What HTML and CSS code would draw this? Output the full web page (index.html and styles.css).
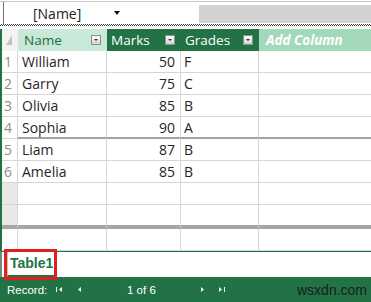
FILE: index.html
```html
<!DOCTYPE html>
<html lang="en">
<head>
  <meta charset="UTF-8">
  <title>Table1</title>
  <link rel="stylesheet" href="styles.css">
</head>
<body>
  <div class="window">
    <div class="namebar">
      <div class="namebox">
        <span class="name-label">[Name]</span>
        <span class="name-arrow"></span>
      </div>
      <div class="formula"></div>
    </div>
    <div class="dither"></div>

    <div class="sheet">
      <div class="row head">
        <div class="cell corner">
          <svg width="12" height="12" viewBox="0 0 12 12"><path d="M10 1 L10 11 L4 11 Z" fill="#c4c4c4"/></svg>
        </div>
        <div class="cell hname">Name <span class="filter"></span></div>
        <div class="cell hdark">Marks <span class="filter"></span></div>
        <div class="cell hdark">Grades <span class="filter"></span></div>
        <div class="cell hadd">Add Column</div>
      </div>

      <div class="row"><div class="cell num">1</div><div class="cell">William</div><div class="cell mark">50</div><div class="cell grade">F</div><div class="cell"></div></div>
      <div class="row"><div class="cell num">2</div><div class="cell">Garry</div><div class="cell mark">75</div><div class="cell grade">C</div><div class="cell"></div></div>
      <div class="row"><div class="cell num">3</div><div class="cell">Olivia</div><div class="cell mark">85</div><div class="cell grade">B</div><div class="cell"></div></div>
      <div class="row split"><div class="cell num">4</div><div class="cell">Sophia</div><div class="cell mark">90</div><div class="cell grade">A</div><div class="cell"></div></div>
      <div class="row"><div class="cell num">5</div><div class="cell">Liam</div><div class="cell mark">87</div><div class="cell grade">B</div><div class="cell"></div></div>
      <div class="row"><div class="cell num">6</div><div class="cell">Amelia</div><div class="cell mark">85</div><div class="cell grade">B</div><div class="cell"></div></div>
      <div class="row empty"><div class="cell num"></div><div class="cell"></div><div class="cell"></div><div class="cell"></div><div class="cell"></div></div>
      <div class="row empty bar"><div class="cell num"></div><div class="cell"></div><div class="cell"></div><div class="cell"></div><div class="cell"></div></div>
      <div class="row"><div class="cell num"></div><div class="cell"></div><div class="cell"></div><div class="cell"></div><div class="cell"></div></div>
    </div>

    <div class="tabs">
      <div class="tab">Table1</div>
    </div>

    <div class="status">
      <span class="rec-label">Record:</span>
      <span class="nav nav-first">
        <svg width="7" height="7" viewBox="0 0 7 7"><rect x="0" y="1" width="1" height="5"/><path d="M6 1 L3 3.5 L6 6 Z"/></svg>
      </span>
      <span class="nav nav-prev">
        <svg width="7" height="7" viewBox="0 0 7 7"><path d="M4 1 L1 3.5 L4 6 Z"/></svg>
      </span>
      <span class="count">1 of 6</span>
      <span class="nav nav-next">
        <svg width="7" height="7" viewBox="0 0 7 7"><path d="M1 1 L4 3.5 L1 6 Z"/></svg>
      </span>
      <span class="nav nav-last">
        <svg width="7" height="7" viewBox="0 0 7 7"><path d="M0 1 L3 3.5 L0 6 Z"/><rect x="5" y="1" width="1" height="5"/></svg>
      </span>
      <span class="watermark">wsxdn.com</span>
    </div>
  </div>
</body>
</html>
```

FILE: styles.css
```css
body {
  margin: 0;
  font-family: "Open Sans", "Noto Sans", sans-serif;
  background-color: #fff;
}

.window {
  width: 371px;
  height: 302px;
  display: flex;
  flex-direction: column;
  overflow: hidden;
}

/* name box + formula strip */
.namebar {
  height: 22px;
  margin-top: 1px;
  border-top: 1px solid #c8c8c8;
  display: flex;
}

.namebox {
  width: 195px;
  margin-left: 3px;
  border-left: 1px solid #707070;
  display: flex;
  align-items: center;
  background-color: #fff;
}

.name-label {
  margin-left: 29px;
  font-size: 14px;
  color: #222;
}

.name-arrow {
  margin-left: 33px;
  width: 0;
  height: 0;
  border-left: 3px solid transparent;
  border-right: 3px solid transparent;
  border-top: 4px solid #111;
}

.formula {
  flex: 1;
  margin: 2px 0 1px 0;
  border-top: 1px solid #fff;
  background-color: #d2d2d2;
}

.dither {
  height: 2px;
  margin-bottom: 3px;
  background: repeating-conic-gradient(#3a3a3a 0 25%, #fff 0 50%) 0 0 / 2px 2px;
}

/* datasheet */
.sheet {
  border-left: 2px solid #217346;
}

.row {
  display: grid;
  grid-template-columns: 16px 89px 74px 78px 1fr;
  height: 22px;
}

.cell {
  box-sizing: border-box;
  border-right: 1px solid #d6d6d6;
  border-bottom: 1px solid #d6d6d6;
  font-size: 14px;
  color: #262626;
  line-height: 21px;
  padding-left: 4px;
  white-space: nowrap;
  overflow: hidden;
}

.cell:last-child {
  border-right: none;
}

.num {
  padding-left: 2px;
  color: #8c8c8c;
}

.mark {
  text-align: right;
  padding-right: 5px;
}

.grade {
  padding-left: 3px;
}

.row.split .cell {
  border-bottom: 2px solid #a3a3a3;
}

.row.split .cell.num {
  border-bottom: 1px solid #d6d6d6;
}

.row.empty .num {
  background-color: #e8e8e8;
}

.row.bar {
  height: 24px;
}

.row.bar .cell {
  border-bottom: 4px solid #a6a6a6;
}

/* header row */
.row.head .cell {
  border: none;
  display: flex;
  align-items: center;
  font-size: 13.5px;
  line-height: 22px;
}

.corner {
  background-color: #f3f3f3;
  padding-left: 0;
}

.hname {
  background-color: #c9e9d8;
  color: #1d6b42;
  padding-left: 6px;
}

.hdark {
  background-color: #217346;
  color: #fff;
}

.hadd {
  background-color: #a3d8bb;
  color: #fff;
  font-style: italic;
  font-weight: bold;
  font-size: 13px;
  padding-left: 7px;
}

.filter {
  position: relative;
  box-sizing: border-box;
  width: 10px;
  height: 10px;
  margin-left: auto;
  margin-right: 6px;
  border: 1px solid #8f8f8f;
  background: linear-gradient(#fdfdfd, #d4d4d4);
}

.filter::after {
  content: "";
  position: absolute;
  left: 2px;
  top: 3px;
  border-left: 2px solid transparent;
  border-right: 2px solid transparent;
  border-top: 2px solid #333;
}

/* object tabs */
.tabs {
  height: 25px;
  border-top: 1px solid #217346;
  border-left: 2px solid #6b8f7a;
  display: flex;
  align-items: stretch;
}

.tab {
  position: relative;
  z-index: 1;
  margin-left: 5px;
  width: 47px;
  box-sizing: border-box;
  border-left: 1px solid #c4c4c4;
  border-bottom: 2px solid #217346;
  font-family: "Liberation Sans", Arial, sans-serif;
  font-weight: bold;
  font-size: 14px;
  color: #217346;
  line-height: 23px;
  padding-left: 2px;
  outline: 3px solid #e0201f;
}

/* record navigator */
.status {
  flex: 1;
  background-color: #217346;
  display: flex;
  align-items: center;
  padding-left: 7px;
  font-family: "Liberation Sans", Arial, sans-serif;
  font-size: 11.5px;
  color: #fff;
}

.rec-label {
  width: 49px;
}

.nav {
  display: flex;
  align-items: center;
}

.nav svg {
  fill: #eef4f0;
}

.nav-first {
  width: 21px;
}

.nav-prev {
  width: 50px;
}

.count {
  width: 73px;
}

.nav-next {
  width: 19px;
}

.nav-last {
  width: 78px;
}

.watermark {
  font-size: 14px;
  color: #1b1b1b;
}
```
